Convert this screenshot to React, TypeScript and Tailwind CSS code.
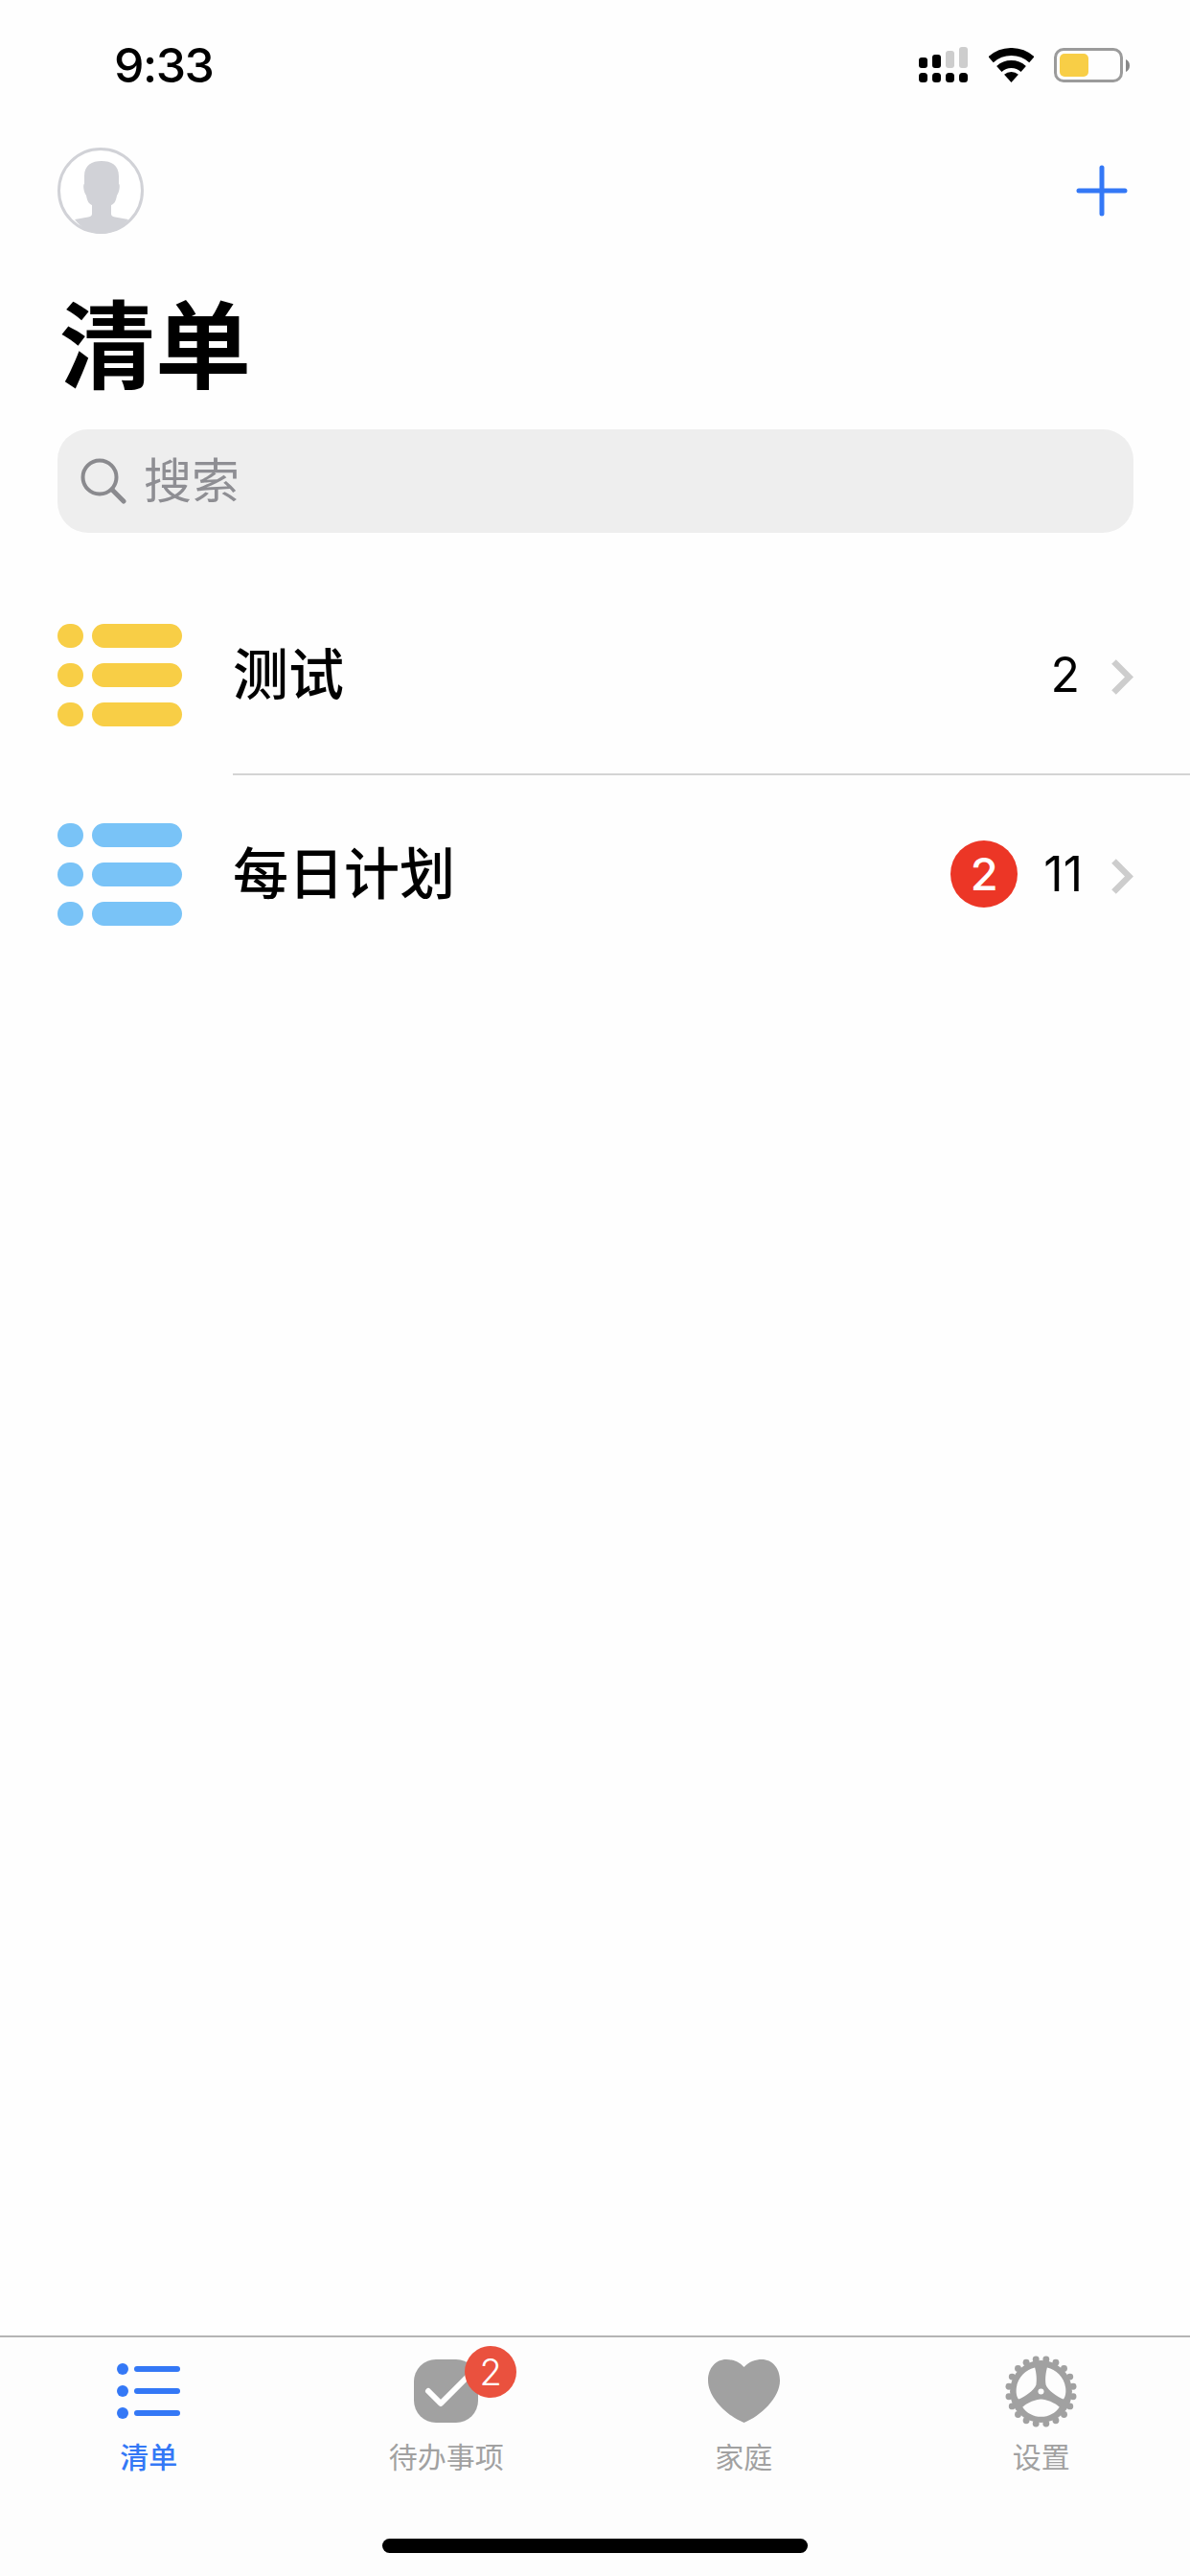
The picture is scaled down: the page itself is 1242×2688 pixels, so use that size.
import React from 'react';

const GEAR_TEETH = Array.from({ length: 20 }, (_, i) => {
  const a = (i / 20) * Math.PI * 2 + Math.PI / 20;
  return { cx: 37 + 33.5 * Math.cos(a), cy: 37 + 33.5 * Math.sin(a) };
});

const SignalIcon = () => (
  <svg width="52" height="38" viewBox="0 0 52 38">
    <rect x="0" y="11" width="9" height="11" rx="3" fill="#000" />
    <rect x="14" y="8" width="9" height="14" rx="3" fill="#000" />
    <rect x="28" y="4" width="9" height="18" rx="3" fill="#cdcdcd" />
    <rect x="42" y="0" width="9" height="22" rx="3" fill="#cdcdcd" />
    <rect x="0" y="27" width="9" height="10" rx="3.5" fill="#000" />
    <rect x="14" y="27" width="9" height="10" rx="3.5" fill="#000" />
    <rect x="28" y="27" width="9" height="10" rx="3.5" fill="#000" />
    <rect x="42" y="27" width="9" height="10" rx="3.5" fill="#000" />
  </svg>
);

const WifiIcon = () => (
  <svg width="47" height="36" viewBox="0 0 47 36" fill="none">
    <path d="M2.1 12.2A32 32 0 0 1 44.9 12.2" stroke="#000" strokeWidth="8" />
    <path d="M10.8 21.9A19 19 0 0 1 36.2 21.9" stroke="#000" strokeWidth="8" />
    <path d="M23.5 36L16.1 27.8A11 11 0 0 1 30.9 27.8Z" fill="#000" />
  </svg>
);

const BatteryIcon = () => (
  <div className="flex items-center gap-[3px]">
    <div className="w-[72px] h-[36px] rounded-[10px] border-[3px] border-[#9b9b9b] p-[3px]">
      <div className="w-[30px] h-full rounded-[5px] bg-[#f8ce46]" />
    </div>
    <svg width="4" height="13" viewBox="0 0 4 13">
      <path d="M0 0C2.5 1 4 3.5 4 6.5S2.5 12 0 13Z" fill="#888" />
    </svg>
  </div>
);

const Avatar = () => (
  <svg width="90" height="90" viewBox="0 0 90 90">
    <circle cx="45" cy="45" r="43.5" fill="#fff" stroke="#d1d2d7" strokeWidth="3" />
    <path
      d="M46 14C36 14 28 18 28 30V38C26.5 38 27 46 30 50C31 56 33 59 36 60V69C36 71 35 72 32 72.5L18 75C25 84 35 90 46 90C57 90 67 84 74 75L60 72.5C57 72 56 71 56 69V60C59 59 61 56 62 50C65 46 65.5 38 64 38V30C64 18 56 14 46 14Z"
      fill="#d1d2d7"
    />
  </svg>
);

const SearchIcon = () => (
  <svg width="48" height="48" viewBox="0 0 48 48" fill="none" stroke="#8a8a8e" strokeLinecap="round">
    <circle cx="20" cy="20" r="17.5" strokeWidth="4" />
    <path d="M33 33L45 45" strokeWidth="5" />
  </svg>
);

const Chevron = () => (
  <svg width="23" height="37" viewBox="0 0 23 37" fill="none">
    <path d="M2.5 2.5L18.5 18.5L2.5 34.5" stroke="#cdcdcd" strokeWidth="6.5" />
  </svg>
);

const ListIcon = ({ dot }: { dot: string }) => (
  <div className="w-[130px] flex flex-col gap-[16px]">
    {[0, 1, 2].map(i => (
      <div key={i} className="flex items-center gap-[9px]">
        <div className={`w-[27px] h-[25px] rounded-full ${dot}`} />
        <div className={`w-[94px] h-[25px] rounded-full ${dot}`} />
      </div>
    ))}
  </div>
);

const TabListIcon = () => (
  <svg width="66" height="58" viewBox="0 0 66 58" fill="#3478f6">
    <circle cx="6" cy="6" r="6" />
    <circle cx="6" cy="29" r="6" />
    <circle cx="6" cy="52" r="6" />
    <rect x="18" y="3" width="48" height="6" rx="3" />
    <rect x="18" y="26" width="48" height="6" rx="3" />
    <rect x="18" y="49" width="48" height="6" rx="3" />
  </svg>
);

const TabTodoIcon = () => (
  <div className="relative w-[67px] h-[66px]">
    <svg width="67" height="66" viewBox="0 0 67 66">
      <rect width="67" height="66" rx="23" fill="#a1a1a1" />
      <path d="M15 33L28 46L56 18" fill="none" stroke="#fff" strokeWidth="6" strokeLinecap="round" strokeLinejoin="round" />
    </svg>
    <div className="absolute left-[53px] top-[-14px] w-[54px] h-[54px] rounded-full bg-[#ea513e] text-white text-[38px] leading-[54px] text-center font-light">
      2
    </div>
  </div>
);

const TabHeartIcon = () => (
  <svg width="75" height="66" viewBox="0 0 75 66">
    <path
      d="M37.5 8C32 2 25 0 19 0C8 0 0 9 0 22C0 40 20 59 37.5 66C55 59 75 40 75 22C75 9 67 0 56 0C50 0 43 2 37.5 8Z"
      fill="#a1a1a1"
    />
  </svg>
);

const TabGearIcon = () => (
  <svg width="75" height="75" viewBox="0 0 74 74">
    {GEAR_TEETH.map((t, i) => (
      <circle key={i} cx={t.cx} cy={t.cy} r="3.4" fill="#a1a1a1" />
    ))}
    <circle cx="37" cy="37" r="32" fill="#a1a1a1" />
    <g fill="#fdfdfd">
      <path d="M30.7 12.3C22 14 13 22 11.7 33C11 38 12 43 14 45C20 42 30 36 32 30C33 24 32 17 30.7 12.3Z" />
      <path d="M43.3 12.3C52 14 61 22 62.3 33C63 38 62 43 60 45C54 42 44 36 42 30C41 24 42 17 43.3 12.3Z" />
      <path d="M18 53C24 48 31 45.5 37 45C43 45.5 50 48 56 53C52 59 45 63 37 63C29 63 22 59 18 53Z" />
      <circle cx="37" cy="37" r="3" />
    </g>
  </svg>
);

const tabs = [
  { label: '清单', icon: <TabListIcon />, color: 'text-[#3478f6] font-medium' },
  { label: '待办事项', icon: <TabTodoIcon />, color: 'text-[#a1a1a1]' },
  { label: '家庭', icon: <TabHeartIcon />, color: 'text-[#a1a1a1]' },
  { label: '设置', icon: <TabGearIcon />, color: 'text-[#a1a1a1]' },
];

const App: React.FC = () => {
  return (
    <div className="w-[1242px] h-[2688px] flex flex-col bg-[#fefefe] text-black font-['Inter','Noto_Sans_CJK_SC',sans-serif]">
      {/* status bar */}
      <div className="h-[136px] flex items-center justify-between pl-[119px] pr-[63px]">
        <span className="text-[50px] leading-none font-medium tracking-[-1.5px]">9:33</span>
        <div className="flex items-center gap-[21px]">
          <SignalIcon />
          <WifiIcon />
          <BatteryIcon />
        </div>
      </div>

      {/* nav */}
      <div className="mt-[18px] h-[90px] flex items-center justify-between pl-[60px] pr-[65px]">
        <Avatar />
        <svg width="54" height="54" viewBox="0 0 54 54" stroke="#3478f6" strokeWidth="5" strokeLinecap="round">
          <path d="M27 3V51M3 27H51" />
        </svg>
      </div>

      <h1 className="mt-[58px] px-[62px] text-[100px] leading-[120px] font-bold">清单</h1>

      <div className="mt-[26px] ml-[60px] mr-[59px] h-[108px] rounded-[32px] bg-[#eeeeee] flex items-center pl-[24px] gap-[18px]">
        <SearchIcon />
        <span className="text-[50px] leading-none text-[#8e8e93]">搜索</span>
      </div>

      {/* lists */}
      <div className="mt-[45px] pl-[60px]">
        <div className="h-[206px] flex items-center pr-[59px]">
          <ListIcon dot="bg-[#f8ce46]" />
          <span className="ml-[53px] flex-1 text-[58px] leading-none font-medium">测试</span>
          <span className="text-[50px] leading-none">2</span>
          <div className="ml-[33px] translate-y-[2px]">
            <Chevron />
          </div>
        </div>
        <div className="ml-[183px] h-[2px] bg-[#d4d4d4]" />
        <div className="h-[206px] flex items-center pr-[59px]">
          <ListIcon dot="bg-[#79c3f7]" />
          <span className="ml-[53px] flex-1 text-[58px] leading-none font-medium">每日计划</span>
          <div className="w-[70px] h-[70px] rounded-full bg-[#ec3626] text-white text-[47px] leading-[70px] text-center font-medium">
            2
          </div>
          <span className="ml-[27px] text-[50px] leading-none">11</span>
          <div className="ml-[30px] translate-y-[2px]">
            <Chevron />
          </div>
        </div>
      </div>

      {/* tab bar */}
      <div className="mt-auto h-[251px] border-t-2 border-[#b4b4b4] bg-[#fdfdfd] flex flex-col">
        <div className="grid grid-cols-4 pt-[18px]">
          {tabs.map(tab => (
            <div key={tab.label} className="flex flex-col items-center">
              <div className="h-[76px] flex items-center justify-center">{tab.icon}</div>
              <span className={`mt-[13px] text-[30px] leading-[36px] ${tab.color}`}>{tab.label}</span>
            </div>
          ))}
        </div>
        <div className="mt-auto mb-[24px] mx-auto w-[444px] h-[15px] rounded-full bg-black" />
      </div>
    </div>
  );
};

export default App;
